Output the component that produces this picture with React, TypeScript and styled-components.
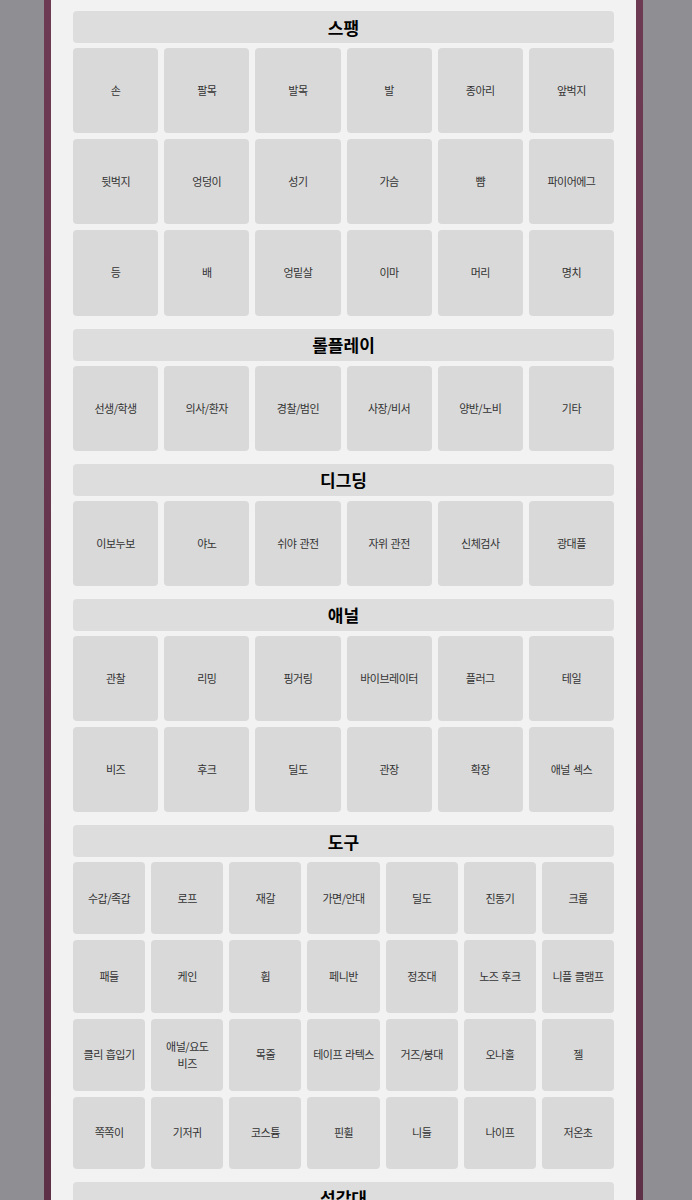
import styled, { createGlobalStyle } from 'styled-components'

const GlobalStyle = createGlobalStyle`
  body {
    margin: 0;
    background: #8f8e93;
    font-family: 'Noto Sans CJK KR', 'Noto Sans', sans-serif;
  }
`

type Category = {
  title: string
  columns: number
  items: string[]
}

// a "\n" in an item marks where the label breaks onto a second line
const categories: Category[] = [
  {
    title: '스팽',
    columns: 6,
    items: [
      '손', '팔목', '발목', '발', '종아리', '앞벅지',
      '뒷벅지', '엉덩이', '성기', '가슴', '뺨', '파이어에그',
      '등', '배', '엉밑살', '이마', '머리', '명치',
    ],
  },
  {
    title: '롤플레이',
    columns: 6,
    items: ['선생/학생', '의사/환자', '경찰/범인', '사장/비서', '양반/노비', '기타'],
  },
  {
    title: '디그딩',
    columns: 6,
    items: ['이보누보', '야노', '쉬야 관전', '자위 관전', '신체검사', '광대플'],
  },
  {
    title: '애널',
    columns: 6,
    items: [
      '관찰', '리밍', '핑거링', '바이브레이터', '플러그', '테일',
      '비즈', '후크', '딜도', '관장', '확장', '애널 섹스',
    ],
  },
  {
    title: '도구',
    columns: 7,
    items: [
      '수갑/족갑', '로프', '재갈', '가면/안대', '딜도', '진동기', '크롭',
      '패들', '케인', '휩', '페니반', '정조대', '노즈 후크', '니플 클램프',
      '클리 흡입기', '애널/요도\n비즈', '목줄', '테이프 라텍스', '거즈/붕대', '오나홀', '젤',
      '쪽쪽이', '기저귀', '코스튬', '핀휠', '니들', '나이프', '저온초',
    ],
  },
  {
    title: '성감대',
    columns: 6,
    items: ['귀', '목', '유두', '겨드랑이', '허벅지', '발가락'],
  },
]

const Panel = styled.main`
  box-sizing: border-box;
  width: 599px;
  margin-left: 44px;
  min-height: 100vh;
  background: #f2f2f2;
  border-style: solid;
  border-width: 0 7px;
  border-image: linear-gradient(180deg, #6d3a53 0%, #5c2f46 100%) 1;
  padding: 11px 22px 20px;
`

const Section = styled.section`
  margin-bottom: 13px;
`

const Heading = styled.h2`
  margin: 0 0 5px;
  height: 32px;
  display: flex;
  align-items: center;
  justify-content: center;
  background: #dddddd;
  border-radius: 4px;
  font-size: 17px;
  font-weight: 700;
  color: #000;
`

const Grid = styled.div<{ $columns: number }>`
  display: grid;
  grid-template-columns: repeat(${({ $columns }) => $columns}, 1fr);
  gap: 6px;
`

const Tag = styled.button`
  aspect-ratio: 1;
  display: flex;
  align-items: center;
  justify-content: center;
  padding: 0 3px;
  border: none;
  border-radius: 4px;
  background: #d9d9d9;
  color: #333;
  font-family: inherit;
  font-size: 11px;
  letter-spacing: -0.5px;
  word-spacing: 1px;
  line-height: 17px;
  text-align: center;
  white-space: pre-line;
  cursor: pointer;
`

export default function App() {
  return (
    <>
      <GlobalStyle />
      <Panel>
        {categories.map((category) => (
          <Section key={category.title}>
            <Heading>{category.title}</Heading>
            <Grid $columns={category.columns}>
              {category.items.map((item) => (
                <Tag key={item}>{item}</Tag>
              ))}
            </Grid>
          </Section>
        ))}
      </Panel>
    </>
  )
}
